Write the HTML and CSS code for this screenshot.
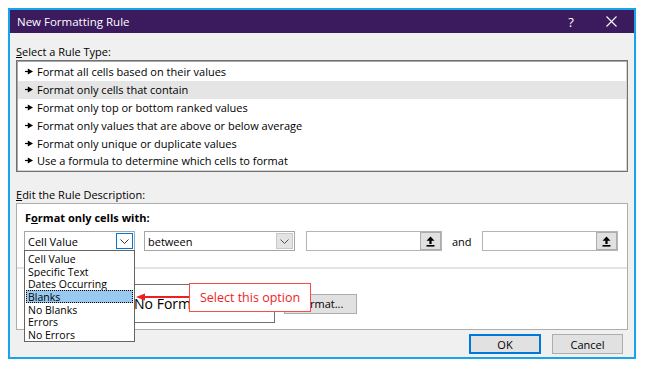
FILE: index.html
```html
<!DOCTYPE html>
<html lang="en">
<head>
  <meta charset="UTF-8" />
  <title>New Formatting Rule</title>
  <link rel="stylesheet" href="styles.css">
</head>
<body>

  <div class="dialog">
    <div class="titlebar">
      <span class="title">New Formatting Rule</span>
      <span class="help">?</span>
      <span class="close">
        <svg width="11" height="11" viewBox="0 0 11 11"><path d="M0.5 0.5L10.5 10.5M10.5 0.5L0.5 10.5" stroke="#fff" stroke-width="1.1" fill="none"/></svg>
      </span>
    </div>

    <div class="content">
      <div class="section-label"><u>S</u>elect a Rule Type:</div>

      <div class="rule-list">
        <div class="rule"><svg class="rule-arrow" width="8" height="7" viewBox="0 0 8 7"><path d="M0 3.5H4" stroke="#000" stroke-width="1.2"/><path d="M2.8 0.6L8 3.5L2.8 6.4Z" fill="#000"/></svg>Format all cells based on their values</div>
        <div class="rule selected"><svg class="rule-arrow" width="8" height="7" viewBox="0 0 8 7"><path d="M0 3.5H4" stroke="#000" stroke-width="1.2"/><path d="M2.8 0.6L8 3.5L2.8 6.4Z" fill="#000"/></svg>Format only cells that contain</div>
        <div class="rule"><svg class="rule-arrow" width="8" height="7" viewBox="0 0 8 7"><path d="M0 3.5H4" stroke="#000" stroke-width="1.2"/><path d="M2.8 0.6L8 3.5L2.8 6.4Z" fill="#000"/></svg>Format only top or bottom ranked values</div>
        <div class="rule"><svg class="rule-arrow" width="8" height="7" viewBox="0 0 8 7"><path d="M0 3.5H4" stroke="#000" stroke-width="1.2"/><path d="M2.8 0.6L8 3.5L2.8 6.4Z" fill="#000"/></svg>Format only values that are above or below average</div>
        <div class="rule"><svg class="rule-arrow" width="8" height="7" viewBox="0 0 8 7"><path d="M0 3.5H4" stroke="#000" stroke-width="1.2"/><path d="M2.8 0.6L8 3.5L2.8 6.4Z" fill="#000"/></svg>Format only unique or duplicate values</div>
        <div class="rule"><svg class="rule-arrow" width="8" height="7" viewBox="0 0 8 7"><path d="M0 3.5H4" stroke="#000" stroke-width="1.2"/><path d="M2.8 0.6L8 3.5L2.8 6.4Z" fill="#000"/></svg>Use a formula to determine which cells to format</div>
      </div>

      <div class="section-label edit-label"><u>E</u>dit the Rule Description:</div>

      <div class="panel">
        <div class="panel-title">F<u>o</u>rmat only cells with:</div>

        <div class="criteria-row">
          <div class="combo combo-type">
            <span class="combo-text">Cell Value</span>
            <span class="combo-btn focused">
              <svg width="9" height="5" viewBox="0 0 9 5"><path d="M0.5 0.5L4.5 4.5L8.5 0.5" stroke="#333" fill="none"/></svg>
            </span>
            <div class="dropdown">
              <div class="dropdown-item">Cell Value</div>
              <div class="dropdown-item">Specific Text</div>
              <div class="dropdown-item">Dates Occurring</div>
              <div class="dropdown-item active">Blanks</div>
              <div class="dropdown-item">No Blanks</div>
              <div class="dropdown-item">Errors</div>
              <div class="dropdown-item">No Errors</div>
            </div>
          </div>

          <div class="combo combo-op">
            <span class="combo-text">between</span>
            <span class="combo-btn">
              <svg width="9" height="5" viewBox="0 0 9 5"><path d="M0.5 0.5L4.5 4.5L8.5 0.5" stroke="#555" fill="none"/></svg>
            </span>
          </div>

          <div class="ref-input">
            <span class="ref-btn">
              <svg width="9" height="11" viewBox="0 0 9 11"><path d="M4.5 0.5L8.5 4.8H5.6V8H3.4V4.8H0.5Z" fill="#000"/><rect x="0.5" y="9" width="8" height="1.6" fill="#000"/></svg>
            </span>
          </div>

          <span class="and">and</span>

          <div class="ref-input">
            <span class="ref-btn">
              <svg width="9" height="11" viewBox="0 0 9 11"><path d="M4.5 0.5L8.5 4.8H5.6V8H3.4V4.8H0.5Z" fill="#000"/><rect x="0.5" y="9" width="8" height="1.6" fill="#000"/></svg>
            </span>
          </div>
        </div>

        <div class="separator"></div>

        <div class="preview-row">
          <div class="preview-box">No Format Set</div>
          <button class="btn format-btn"><u>F</u>ormat...</button>
        </div>

        <!-- annotation -->
        <svg class="callout-arrow" width="53" height="10" viewBox="0 0 53 10">
          <path d="M7 5H53" stroke="#f01e1e" stroke-width="2"/>
          <path d="M0 5L9 1.5V8.5Z" fill="#f01e1e"/>
        </svg>
        <div class="callout">Select this option</div>
      </div>

      <div class="button-row">
        <button class="btn ok-btn">OK</button>
        <button class="btn">Cancel</button>
      </div>
    </div>
  </div>

</body>
</html>
```

FILE: styles.css
```css
body {
  margin: 0;
  background: #fff;
  font-family: 'Open Sans', 'Noto Sans', sans-serif;
  font-size: 11px;
  color: #000;
}
.dialog {
  margin: 8px 0 0 8px;
  width: 624px;
  height: 347px;
  border: 2px solid #16a5eb;
  background: #f0f0f0;
  display: flex;
  flex-direction: column;
}
.titlebar {
  height: 23px;
  flex-shrink: 0;
  background: #3b1a5e;
  color: #fff;
  display: flex;
  align-items: center;
  padding-left: 7px;
  font-size: 11.5px;
}
.title {
  flex: 1;
}
.help {
  width: 14px;
  margin-right: 11px;
  text-align: center;
  font-size: 13px;
}
.close {
  width: 45px;
  display: flex;
  justify-content: center;
}
.content {
  padding: 11px 6px 0 6px;
}
.section-label {
  line-height: 16px;
}
.edit-label {
  margin-top: 15px;
}
.rule-list {
  height: 112px;
  box-sizing: border-box;
  border: 1px solid #707070;
  box-shadow: inset 1px 1px 0 #a8a8a8, inset -1px -1px 0 #d6d6d6;
  background: #fff;
  padding: 2px 1px 0 1px;
}
.rule {
  height: 17.8px;
  display: flex;
  align-items: center;
  padding-left: 7px;
}
.rule.selected {
  background: #e5e5e5;
}
.rule-arrow {
  margin-right: 4px;
}
.panel {
  position: relative;
  height: 127px;
  box-sizing: border-box;
  border: 1px solid #adadad;
  background: #fff;
  padding: 6px 8px 6px 7px;
}
.panel-title {
  font-weight: 700;
  line-height: 16px;
  margin-left: 1px;
}
.criteria-row {
  display: flex;
  align-items: center;
  margin-top: 5px;
  height: 20px;
}
.combo {
  position: relative;
  height: 20px;
  box-sizing: border-box;
  border: 1px solid #a6a6a6;
  background: #fff;
  display: flex;
  align-items: center;
}
.combo-type {
  width: 111px;
}
.combo-op {
  width: 151px;
  margin-left: 9px;
}
.combo-text {
  flex: 1;
  padding-left: 3px;
}
.combo-btn {
  width: 17px;
  height: 16px;
  margin-right: 1px;
  box-sizing: border-box;
  border: 1px solid #c8c8c8;
  background: #e3e3e3;
  display: flex;
  align-items: center;
  justify-content: center;
}
.combo-btn.focused {
  border-color: #0078d7;
  background: #fff;
}
.dropdown {
  position: absolute;
  top: 100%;
  left: -1px;
  width: 111px;
  box-sizing: border-box;
  border: 1px solid #646464;
  background: #fff;
  padding: 1px 1px 0 1px;
  z-index: 2;
}
.dropdown-item {
  height: 12.7px;
  line-height: 12.7px;
  font-size: 10.5px;
  padding: 1px 0 0 2px;
  box-sizing: border-box;
  overflow: hidden;
}
.dropdown-item.active {
  background: #99c9ef;
  outline: 1px dotted #000;
  outline-offset: -1px;
}
.ref-input {
  width: 136px;
  height: 20px;
  box-sizing: border-box;
  border: 1px solid #b4b4b4;
  background: #fff;
  display: flex;
  justify-content: flex-end;
  margin-left: 11px;
}
.ref-btn {
  width: 21px;
  height: 18px;
  box-sizing: border-box;
  border: 1px solid #adadad;
  background: #e1e1e1;
  display: flex;
  align-items: center;
  justify-content: center;
}
.and {
  margin-left: 10px;
  width: 20px;
}
.and + .ref-input {
  margin-left: 10px;
}
.separator {
  height: 2px;
  background: #e3e3e3;
  margin: 16px -8px 0 -7px;
}
.preview-row {
  display: flex;
  align-items: center;
  margin-top: 15px;
  height: 39px;
}
.preview-box {
  width: 188px;
  height: 39px;
  margin-left: 63px;
  box-sizing: border-box;
  border: 1px solid #707070;
  display: flex;
  align-items: center;
  justify-content: center;
  font-size: 14px;
}
.btn {
  height: 20px;
  box-sizing: border-box;
  border: 1px solid #adadad;
  background: #e1e1e1;
  font-family: inherit;
  font-size: 11px;
  color: #000;
  padding: 0;
  width: 71px;
}
.format-btn {
  width: 73px;
  margin-left: 9px;
}
.callout-arrow {
  position: absolute;
  left: 119px;
  top: 88px;
}
.callout {
  position: absolute;
  left: 172px;
  top: 79px;
  width: 122px;
  height: 29px;
  box-sizing: border-box;
  border: 1px solid #ff4a4a;
  background: #fff;
  color: #f01e1e;
  font-size: 12.5px;
  display: flex;
  align-items: center;
  justify-content: center;
}
.button-row {
  display: flex;
  justify-content: flex-end;
  gap: 11px;
  margin: 4px 5px 0 0;
}
.ok-btn {
  width: 72px;
  border: 2px solid #0078d7;
}
```
